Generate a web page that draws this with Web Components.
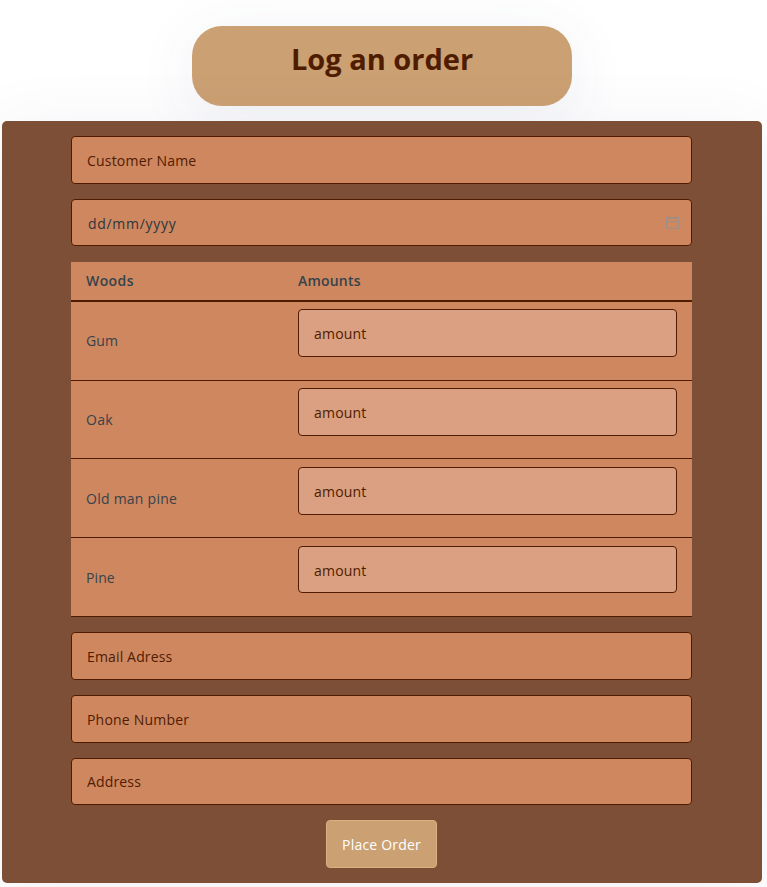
<!DOCTYPE html>
<html lang="en">
<head>
<meta charset="utf-8">
<title>Log an order</title>
<style>
html,body{margin:0;height:887px;overflow:hidden;background:#fff}
body{font-family:"Open Sans","Noto Sans",sans-serif;color:#35434b}
</style>
</head>
<body>
<order-page></order-page>
<script>
function define(name, html) {
  customElements.define(name, class extends HTMLElement {
    constructor() {
      super();
      this.attachShadow({ mode: 'open' }).innerHTML = html;
    }
  });
}

define('page-title', `
<style>
:host{display:block;box-sizing:border-box;width:380px;height:80px;padding-top:13px;border-radius:30px;background:#cba072;box-shadow:0 10px 60px rgba(60,70,125,.085);text-align:center}
h1{margin:0;font-size:29px;line-height:40px;font-weight:700;color:#4f1c00}
</style><h1><slot></slot></h1>`);

define('text-field', `
<style>
:host{display:flex;box-sizing:border-box;align-items:center;height:48px;padding:1px 11px 0 15px;border:1px solid #4f1c00;border-radius:4px;background:var(--fill,#cf8760);color:#4f1c00;font-size:14px;line-height:20px;white-space:nowrap}
span{letter-spacing:var(--ls,0)}
slot[name=icon]{display:block;margin-left:auto}
</style><span><slot></slot></span><slot name="icon"></slot>`);

define('calendar-icon', `
<style>:host{display:block;width:15px;height:15px;margin-top:-2px}svg{display:block}</style>
<svg width="15" height="15" viewBox="0 0 15 15" fill="none" stroke="#9c8e89" stroke-width="1.2"><rect x="1.5" y="2.5" width="12" height="11" rx=".8"/><path d="M1.5 6.5h12M4.5 .8v3.4M10.5 .8v3.4M2 3h11"/></svg>`);

define('wood-row', `
<style>
:host{display:grid;box-sizing:border-box;grid-template-columns:212px 1fr;height:var(--h,79px);padding:var(--top,7px) 15px 0;border-bottom:1px solid #4f1c00;font-size:14px;line-height:20px}
.name{padding-top:22px;letter-spacing:var(--ls,0)}
text-field{--fill:#daa081;--ls:.2px;height:var(--fh,48px);padding-top:var(--ft,1px)}
</style>
<div class="name"><slot></slot></div><text-field>amount</text-field>`);

define('wood-table', `
<style>
:host{display:block;background:#cf8760}
.head{display:grid;box-sizing:border-box;grid-template-columns:212px 1fr;height:40px;padding:9px 15px 0;border-bottom:2px solid #4f1c00;font-size:14px;line-height:20px;font-weight:600}
</style>
<div class="head"><span style="letter-spacing:.4px">Woods</span><span style="letter-spacing:.2px">Amounts</span></div>
<wood-row style="--ls:.1px">Gum</wood-row>
<wood-row style="--h:78px;--ls:.3px">Oak</wood-row>
<wood-row style="--top:8px;--ls:.25px">Old man pine</wood-row>
<wood-row style="--top:8px;--fh:47px;--ft:3px;--ls:.1px">Pine</wood-row>`);

define('order-button', `
<style>
button{display:block;box-sizing:border-box;width:111px;height:48px;margin:0;padding:1px 0 0;border:1px solid #d9b182;border-radius:4px;background:#cba072;color:#fff;font:14px/20px "Open Sans","Noto Sans",sans-serif;letter-spacing:.2px;white-space:nowrap}
</style><button type="button"><slot></slot></button>`);

define('order-form', `
<style>
:host{display:grid;box-sizing:border-box;width:760px;height:762px;padding:15px 70px 15px 69px;grid-template-rows:48px 47px 355px 48px 48px 47px 48px;row-gap:15px;align-content:start;border-radius:5px;background:#7d4f36;box-shadow:0 10px 70px rgba(60,70,125,.08)}
text-field{height:auto}
wood-table,.late,order-button{margin:1px 0 -1px}
order-button{justify-self:center}
</style>
<text-field style="--ls:.2px">Customer Name</text-field>
<text-field style="--ls:.7px;color:#2b363d;padding:2px 11px 0 16px">dd/mm/yyyy<calendar-icon slot="icon"></calendar-icon></text-field>
<wood-table></wood-table>
<text-field class="late" style="--ls:.15px">Email Adress</text-field>
<text-field class="late" style="--ls:.2px">Phone Number</text-field>
<text-field class="late" style="--ls:.15px">Address</text-field>
<order-button>Place Order</order-button>`);

define('order-page', `
<style>
:host{display:flex;flex-direction:column;padding:26px 0 0 2px}
page-title{margin-left:190px}
order-form{margin-top:15px}
</style>
<page-title>Log an order</page-title>
<order-form></order-form>`);
</script>
</body>
</html>
